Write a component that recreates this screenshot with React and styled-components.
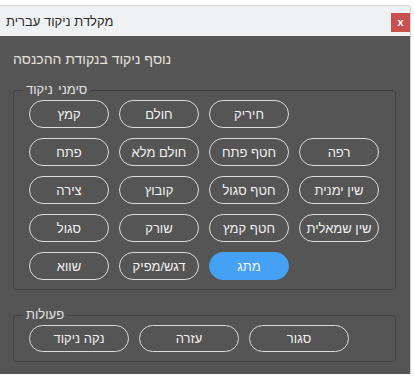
import React from "react";
import styled, { createGlobalStyle } from "styled-components";

const Global = createGlobalStyle`
  html, body { margin: 0; padding: 0; background: #ffffff; }
  body { font-family: "Liberation Sans", Arial, sans-serif; overflow: hidden; }
`;

const Dialog = styled.div`
  margin: 5px 0 0 -1px;
  width: 410px;
  border: 1px solid #d0d2d4;
  border-bottom: none;
  border-radius: 0 4px 0 0;
  overflow: hidden;
`;

const TitleBar = styled.div`
  height: 30px;
  background: #eff1f2;
  display: flex;
  align-items: center;
  justify-content: space-between;
  padding: 0 0 0 6px;
`;

const Title = styled.span`
  font-size: 13px;
  color: #2a2a2a;
`;

const Close = styled.button`
  width: 19px;
  height: 19px;
  margin: 3px 0 0 0;
  padding: 0;
  border: none;
  background: #c8504f;
  color: #ffffff;
  font: bold 11px "Liberation Sans", Arial, sans-serif;
  line-height: 17px;
  display: flex;
  align-items: center;
  justify-content: center;
`;

const Body = styled.div`
  background: #555555;
  padding: 15px 14px 12px 13px;
  color: #e2e2e2;
`;

const Note = styled.div`
  font-size: 14px;
  line-height: 17px;
  color: #e4e0dc;
  margin-bottom: 14px;
`;

const Group = styled.fieldset`
  margin: 0;
  padding: 0;
  border: 1px solid #434343;
  border-radius: 3px;
  width: 381px;
  min-inline-size: 0;
  & + & {
    margin-top: 17px;
  }
`;

const Legend = styled.legend`
  margin-left: 9px;
  padding: 0 3px;
  font-size: 13px;
  line-height: 16px;
  word-spacing: 2px;
  color: #e2e2e2;
`;

const Keys = styled.div`
  display: grid;
  grid-template-columns: repeat(${(p) => p.$cols}, ${(p) => p.$w}px);
  grid-auto-rows: ${(p) => p.$h}px;
  gap: 10px;
  padding: 2px 15px 9px 15px;
`;

const Key = styled.button`
  box-sizing: border-box;
  height: 100%;
  border-radius: 14px;
  border: 1px solid ${(p) => (p.$active ? "#45a1f4" : "#dcdcdc")};
  background: ${(p) => (p.$active ? "#45a1f4" : "transparent")};
  color: #f2f2f2;
  font-family: "Liberation Sans", Arial, sans-serif;
  font-size: 13px;
  padding: 0;
  cursor: pointer;
`;

const Empty = styled.span``;

const rows = [
  ["קמץ", "חולם", "חיריק", null],
  ["פתח", "חולם מלא", "חטף פתח", "רפה"],
  ["צירה", "קובוץ", "חטף סגול", "שין ימנית"],
  ["סגול", "שורק", "חטף קמץ", "שין שמאלית"],
  ["שווא", "דגש/מפיק", "מתג", null],
];

const actions = ["נקה ניקוד", "עזרה", "סגור"];

export default function App() {
  return (
    <>
      <Global />
      <Dialog>
        <TitleBar>
          <Title>מקלדת ניקוד עברית</Title>
          <Close>x</Close>
        </TitleBar>
        <Body>
          <Note>נוסף ניקוד בנקודת ההכנסה</Note>
          <Group>
            <Legend>סימני ניקוד</Legend>
            <Keys $cols={4} $w={80} $h={28}>
              {rows.flat().map((k, i) =>
                k ? (
                  <Key key={i} $active={k === "מתג"}>
                    {k}
                  </Key>
                ) : (
                  <Empty key={i} />
                )
              )}
            </Keys>
          </Group>
          <Group>
            <Legend>פעולות</Legend>
            <Keys $cols={3} $w={100} $h={27}>
              {actions.map((a) => (
                <Key key={a}>{a}</Key>
              ))}
            </Keys>
          </Group>
        </Body>
      </Dialog>
    </>
  );
}
